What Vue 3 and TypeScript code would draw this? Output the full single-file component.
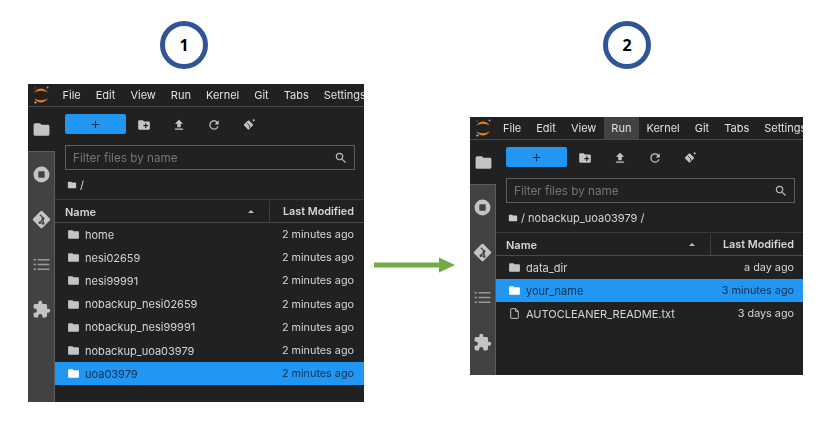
<script setup lang="ts">
interface Row {
  name: string
  modified: string
  kind: 'dir' | 'file'
  selected?: boolean
}

interface Panel {
  id: string
  step: number
  path: string
  activeMenu?: string
  rows: Row[]
}

const menus = ['File', 'Edit', 'View', 'Run', 'Kernel', 'Git', 'Tabs', 'Settings']

const folderPath = 'M10 4H4c-1.1 0-2 .9-2 2v12c0 1.1.9 2 2 2h16c1.1 0 2-.9 2-2V8c0-1.1-.9-2-2-2h-8l-2-2z'

const panels: Panel[] = [
  {
    id: 'first',
    step: 1,
    path: '/',
    rows: [
      { name: 'home', modified: '2 minutes ago', kind: 'dir' },
      { name: 'nesi02659', modified: '2 minutes ago', kind: 'dir' },
      { name: 'nesi99991', modified: '2 minutes ago', kind: 'dir' },
      { name: 'nobackup_nesi02659', modified: '2 minutes ago', kind: 'dir' },
      { name: 'nobackup_nesi99991', modified: '2 minutes ago', kind: 'dir' },
      { name: 'nobackup_uoa03979', modified: '2 minutes ago', kind: 'dir' },
      { name: 'uoa03979', modified: '2 minutes ago', kind: 'dir', selected: true },
    ],
  },
  {
    id: 'second',
    step: 2,
    path: '/ nobackup_uoa03979 /',
    activeMenu: 'Run',
    rows: [
      { name: 'data_dir', modified: 'a day ago', kind: 'dir' },
      { name: 'your_name', modified: '3 minutes ago', kind: 'dir', selected: true },
      { name: 'AUTOCLEANER_README.txt', modified: '3 days ago', kind: 'file' },
    ],
  },
]
</script>

<template>
  <div class="page">
    <template v-for="(panel, index) in panels" :key="panel.id">
      <svg v-if="index === 1" class="arrow" viewBox="0 0 82 16">
        <polygon points="0,5.5 65,5.5 65,0.5 81,8 65,15.5 65,10.5 0,10.5" fill="#70ad47" />
      </svg>
      <section class="figure" :class="`figure--${panel.id}`">
        <div class="step">{{ panel.step }}</div>
        <div class="panel">
          <header class="menubar">
            <svg class="logo" viewBox="0 0 16 18">
              <path d="M1 6.5Q8 -1.5 15 6.5Q8 3 1 6.5z" fill="#e87b1c" />
              <path d="M1 12.5Q8 20.5 15 12.5Q8 16 1 12.5z" fill="#e87b1c" />
              <circle cx="14.5" cy="1.5" r="1" fill="#9e9e9e" />
              <circle cx="2" cy="2" r="0.7" fill="#757575" />
              <circle cx="2.5" cy="16.5" r="1.1" fill="#bdbdbd" />
            </svg>
            <span
              v-for="menu in menus"
              :key="menu"
              class="menu-item"
              :class="{ 'menu-item--active': menu === panel.activeMenu }"
            >{{ menu }}</span>
          </header>

          <div class="body">
            <nav class="sidebar">
              <div class="tab tab--active">
                <svg viewBox="0 0 24 24" class="tab-icon"><path :d="folderPath" /></svg>
              </div>
              <div class="tab">
                <svg viewBox="0 0 24 24" class="tab-icon">
                  <path fill-rule="evenodd" d="M12 2a10 10 0 100 20 10 10 0 000-20zM9 8h6a1 1 0 011 1v6a1 1 0 01-1 1H9a1 1 0 01-1-1V9a1 1 0 011-1z" />
                </svg>
              </div>
              <div class="tab">
                <svg viewBox="0 0 24 24" class="tab-icon">
                  <path d="M10.6 1.6a2 2 0 012.8 0l9 9a2 2 0 010 2.8l-9 9a2 2 0 01-2.8 0l-9-9a2 2 0 010-2.8z" />
                  <path d="M10 6l4 4v7M14 10l-4 7" fill="none" stroke="#424242" stroke-width="1.6" />
                  <circle cx="14" cy="10.5" r="1.7" fill="#424242" />
                  <circle cx="14" cy="17" r="1.7" fill="#424242" />
                  <circle cx="10" cy="16" r="1.7" fill="#424242" />
                </svg>
              </div>
              <div class="tab">
                <svg viewBox="0 0 24 24" class="tab-icon tab-icon--dim">
                  <path d="M2 5h3v2H2zM7 5h15v2H7zM2 11h3v2H2zM7 11h15v2H7zM2 17h3v2H2zM7 17h15v2H7z" />
                </svg>
              </div>
              <div class="tab">
                <svg viewBox="0 0 24 24" class="tab-icon">
                  <path d="M20.5 11H19V7c0-1.1-.9-2-2-2h-4V3.5C13 2.12 11.88 1 10.5 1S8 2.12 8 3.5V5H4c-1.1 0-1.99.9-1.99 2v3.8H3.5c1.49 0 2.7 1.21 2.7 2.7s-1.21 2.7-2.7 2.7H2V20c0 1.1.9 2 2 2h3.8v-1.5c0-1.49 1.21-2.7 2.7-2.7 1.49 0 2.7 1.21 2.7 2.7V22H17c1.1 0 2-.9 2-2v-4h1.5c1.38 0 2.5-1.12 2.5-2.5S21.88 11 20.5 11z" />
                </svg>
              </div>
            </nav>

            <main class="browser">
              <div class="toolbar">
                <button class="launcher">
                  <svg viewBox="0 0 24 24" class="launcher-icon"><path d="M11 5h2v6h6v2h-6v6h-2v-6H5v-2h6z" /></svg>
                </button>
                <span class="tool">
                  <svg viewBox="0 0 24 24"><path d="M20 6h-8l-2-2H4c-1.11 0-2 .89-2 2v12c0 1.11.89 2 2 2h16c1.11 0 2-.89 2-2V8c0-1.11-.89-2-2-2zm-1 8h-3v3h-2v-3h-3v-2h3V9h2v3h3v2z" /></svg>
                </span>
                <span class="tool">
                  <svg viewBox="0 0 24 24"><path d="M9 16h6v-6h4l-7-7-7 7h4zm-4 2h14v2H5z" /></svg>
                </span>
                <span class="tool">
                  <svg viewBox="0 0 24 24"><path d="M17.65 6.35C16.2 4.9 14.21 4 12 4c-4.42 0-7.99 3.58-7.99 8s3.57 8 7.99 8c3.73 0 6.84-2.55 7.73-6h-2.08c-.82 2.33-3.04 4-5.65 4-3.31 0-6-2.69-6-6s2.69-6 6-6c1.66 0 3.14.69 4.22 1.78L13 11h7V4l-2.35 2.35z" /></svg>
                </span>
                <span class="tool">
                  <svg viewBox="0 0 24 24">
                    <path d="M10 4.5a1.6 1.6 0 012.2 0l6.3 6.3a1.6 1.6 0 010 2.2l-6.3 6.3a1.6 1.6 0 01-2.2 0l-6.3-6.3a1.6 1.6 0 010-2.2z" />
                    <path d="M9 9l4 4v4" fill="none" stroke="#212121" stroke-width="1.6" />
                    <circle cx="20" cy="4" r="1.8" />
                  </svg>
                </span>
              </div>

              <div class="filter">
                <span class="filter-text">Filter files by name</span>
                <svg viewBox="0 0 24 24" class="filter-icon"><path d="M15.5 14h-.79l-.28-.27C15.41 12.59 16 11.11 16 9.5 16 5.91 13.09 3 9.5 3S3 5.91 3 9.5 5.91 16 9.5 16c1.61 0 3.09-.59 4.23-1.57l.27.28v.79l5 4.99L20.49 19l-4.99-5zm-6 0C7.01 14 5 11.99 5 9.5S7.01 5 9.5 5 14 7.01 14 9.5 11.99 14 9.5 14z" /></svg>
              </div>

              <div class="crumbs">
                <svg viewBox="0 0 24 24" class="crumb-icon"><path :d="folderPath" /></svg>
                <span>{{ panel.path }}</span>
              </div>

              <div class="list-head">
                <div class="head-name">
                  <span>Name</span>
                  <i class="caret"></i>
                </div>
                <div class="head-date">Last Modified</div>
              </div>

              <div
                v-for="row in panel.rows"
                :key="row.name"
                class="row"
                :class="{ 'row--selected': row.selected }"
              >
                <svg v-if="row.kind === 'dir'" viewBox="0 0 24 24" class="row-icon"><path :d="folderPath" /></svg>
                <svg v-else viewBox="0 0 24 24" class="row-icon row-icon--file">
                  <path d="M14 3H6a1 1 0 00-1 1v16a1 1 0 001 1h12a1 1 0 001-1V8zM14 3v5h5" />
                </svg>
                <span class="row-name">{{ row.name }}</span>
                <span class="row-date">{{ row.modified }}</span>
              </div>
            </main>
          </div>
        </div>
      </section>
    </template>
  </div>
</template>

<style>
html,
body {
  background: #fff;
}
</style>

<style scoped>
.page {
  display: flex;
  align-items: flex-start;
  width: 832px;
  height: 428px;
  padding-left: 28px;
  box-sizing: border-box;
  overflow: hidden;
  font-family: Inter, "Liberation Sans", sans-serif;
}

.figure {
  display: flex;
  flex-direction: column;
  flex-shrink: 0;
  padding-top: 21px;
}

.figure--first {
  width: 336px;
}

.figure--second {
  width: 333px;
}

.step {
  width: 48px;
  height: 48px;
  box-sizing: border-box;
  border: 5px solid #2f5597;
  border-radius: 50%;
  display: flex;
  align-items: center;
  justify-content: center;
  font-family: "Open Sans", "Liberation Sans", sans-serif;
  font-weight: 700;
  font-size: 16px;
  color: #000;
}

.figure--first .step {
  margin-left: 132px;
  margin-bottom: 15px;
}

.figure--second .step {
  margin-left: 133px;
  margin-bottom: 48px;
}

.arrow {
  flex-shrink: 0;
  width: 82px;
  height: 16px;
  margin: 257px 14px 0 10px;
}

.panel {
  display: flex;
  flex-direction: column;
  background: #212121;
  color: #d6d6d6;
  font-size: 11px;
  overflow: hidden;
  filter: blur(0.35px);
}

.figure--first .panel {
  height: 318px;
}

.figure--second .panel {
  height: 258px;
}

.menubar {
  display: flex;
  align-items: stretch;
  flex-shrink: 0;
  height: 22px;
  border-bottom: 1px solid #4a4a4a;
  white-space: nowrap;
}

.logo {
  width: 16px;
  height: 18px;
  margin: 2px 6px 0 5px;
  flex-shrink: 0;
}

.figure--second .logo {
  margin-right: 4.5px;
}

.menu-item {
  display: flex;
  align-items: center;
  padding: 0 7.5px;
  color: #e0e0e0;
}

.menu-item--active {
  background: #424242;
}

.body {
  flex: 1;
  display: flex;
  min-height: 0;
}

.sidebar {
  width: 27px;
  flex-shrink: 0;
  box-sizing: border-box;
  background: #424242;
  border-right: 1px solid #5c5c5c;
}

.figure--second .sidebar {
  width: 26px;
}

.tab {
  height: 45px;
  display: flex;
  align-items: center;
  justify-content: center;
}

.tab--active {
  background: #212121;
  margin-right: -1px;
  border-bottom: 1px solid #5c5c5c;
  box-sizing: border-box;
}

.tab-icon {
  width: 19px;
  height: 19px;
  fill: #c4c4c4;
}

.tab-icon--dim {
  fill: #9a9a9a;
}

.browser {
  flex: 1;
  min-width: 0;
  display: flex;
  flex-direction: column;
}

.toolbar {
  display: flex;
  align-items: center;
  height: 20px;
  margin: 7px 0 0 10px;
}

.launcher {
  width: 61px;
  height: 20px;
  padding: 0;
  border: none;
  border-radius: 2px;
  background: #2196f3;
  display: flex;
  align-items: center;
  justify-content: center;
}

.launcher-icon {
  width: 13px;
  height: 13px;
  fill: #10304d;
}

.tool {
  width: 35px;
  display: flex;
  justify-content: center;
  padding-top: 2px;
}

.tool svg {
  width: 14px;
  height: 14px;
  fill: #c4c4c4;
}

.filter {
  display: flex;
  align-items: center;
  justify-content: space-between;
  box-sizing: border-box;
  height: 25px;
  margin: 11px 9px 0 10px;
  padding: 0 6px 0 7px;
  border: 1px solid #5e5e5e;
  font-size: 11.7px;
  color: #757575;
}

.figure--second .filter {
  margin-right: 8px;
}

.filter-text {
  padding-top: 1px;
}

.filter-icon {
  width: 14px;
  height: 14px;
  fill: #bdbdbd;
}

.crumbs {
  display: flex;
  align-items: center;
  gap: 3px;
  height: 30px;
  box-sizing: border-box;
  padding: 1px 0 0 12px;
  border-bottom: 1px solid #3a3a3a;
  color: #d6d6d6;
}

.crumb-icon {
  width: 10px;
  height: 10px;
  fill: #c8c8c8;
}

.list-head {
  display: flex;
  height: 23px;
  box-sizing: border-box;
  padding-top: 1px;
  border-bottom: 1px solid #4a4a4a;
  font-weight: 600;
  color: #d6d6d6;
}

.head-name {
  flex: 1;
  display: flex;
  align-items: center;
  justify-content: space-between;
  padding: 0 15px 0 10px;
  border-right: 1px solid #3e3e3e;
}

.caret {
  width: 0;
  height: 0;
  border: 3.5px solid transparent;
  border-top: none;
  border-bottom: 3.5px solid #bdbdbd;
}

.head-date {
  width: 94px;
  display: flex;
  align-items: center;
  justify-content: flex-end;
  padding-right: 10px;
  box-sizing: border-box;
  font-size: 10.8px;
}

.figure--second .head-date {
  padding-right: 9px;
  width: 92px;
}

.row {
  display: flex;
  align-items: center;
  height: 23.2px;
  flex-shrink: 0;
  padding: 0 10px 0 12px;
}

.figure--second .row {
  padding-right: 9px;
}

.row--selected {
  background: #2196f3;
  color: #12324f;
}

.row-icon {
  width: 13px;
  height: 13px;
  margin-right: 5px;
  fill: #c4c4c4;
}

.row-icon--file {
  fill: none;
  stroke: #c4c4c4;
  stroke-width: 1.8;
}

.row--selected .row-icon {
  fill: #fff;
}

.row-name {
  flex: 1;
}

.row-date {
  font-size: 10.8px;
}
</style>
